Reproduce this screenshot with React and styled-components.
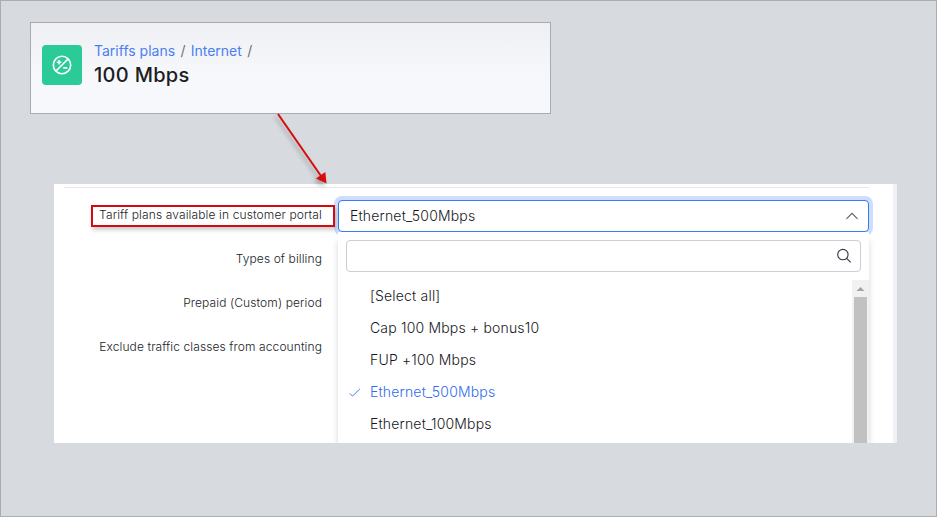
import React from "react";
import styled, { createGlobalStyle } from "styled-components";

const GlobalStyle = createGlobalStyle`
  *, *::before, *::after { box-sizing: border-box; }
  body { margin: 0; font-family: Inter, "Liberation Sans", sans-serif; }
`;

const Page = styled.main`
  position: relative;
  width: 937px;
  height: 517px;
  padding: 21px 0 0 29px;
  border: 1px solid #acadaf;
  background: #d7dadf;
  overflow: hidden;
`;

const HeaderCard = styled.header`
  display: flex;
  align-items: flex-start;
  gap: 12px;
  width: 521px;
  height: 92px;
  padding: 19px 11px;
  border: 1px solid #a9abae;
  background: linear-gradient(#eff0f4, #f7f8fc 60%);
`;

const TariffBadge = styled.div`
  display: grid;
  place-items: center;
  width: 40px;
  height: 40px;
  margin-top: 3px;
  border-radius: 4px;
  background: #2acb97;
`;

const HeaderText = styled.div`
  display: flex;
  flex-direction: column;
`;

const Breadcrumbs = styled.nav`
  display: flex;
  gap: 5.3px;
  height: 18px;
  font-size: 14px;
  line-height: 18px;
  color: #6b7078;
  white-space: nowrap;
`;

const Crumb = styled.a`
  color: #4a7ff0;
`;

const Title = styled.h1`
  margin: 2px 0 0;
  font-size: 20px;
  line-height: 26px;
  font-weight: 500;
  letter-spacing: 0.3px;
  color: #1c1e22;
`;

const FormPanel = styled.section`
  width: 843px;
  height: 259px;
  margin: 70px 0 0 24px;
  padding: 3px 24px 0 10px;
  border-right: 4px solid #eff1f6;
  background: #fff;
  overflow: hidden;
`;

const FormBody = styled.div`
  display: grid;
  grid-template-columns: 271px 531px;
  column-gap: 3px;
  width: 805px;
  height: 256px;
  padding-top: 12px;
  border-top: 1px solid #e8e8ea;
`;

const Labels = styled.div`
  display: flex;
  flex-direction: column;
  align-items: flex-end;
  gap: 22px;
  padding-top: 5px;
`;

const Label = styled.label`
  height: 22px;
  padding: 0 13px 0 8px;
  font-size: 12px;
  line-height: 20px;
  font-weight: 300;
  letter-spacing: 0.1px;
  color: #202328;
  white-space: nowrap;
`;

const MarkedLabel = styled(Label)`
  z-index: 1;
  padding: 0 11px 0 6px;
  border: 2px solid #d20a11;
  line-height: 16px;
  letter-spacing: 0.12px;
  box-shadow: 1px 3px 4px rgba(0, 0, 0, 0.2);
`;

const Picker = styled.div`
  display: flex;
  flex-direction: column;
  height: 243px;
`;

const SelectField = styled.div`
  display: flex;
  flex: none;
  align-items: center;
  justify-content: space-between;
  height: 32px;
  padding: 0 9px 0 11px;
  border: 1px solid #357bf2;
  border-radius: 4px;
  background: #fff;
  box-shadow: 0 0 0 4px #cdddfb;
  font-size: 14px;
  color: #16181c;
`;

const Dropdown = styled.div`
  position: relative;
  flex: 1;
  display: flex;
  flex-direction: column;
  margin-top: 3px;
  padding-top: 5px;
  background: #fff;
  box-shadow: 0 6px 6px rgba(0, 0, 0, 0.16), 0 -3px 0 #fff;
`;

const SearchField = styled.div`
  display: flex;
  flex: none;
  align-items: center;
  justify-content: flex-end;
  height: 32px;
  margin: 0 8px 8px;
  padding-right: 8px;
  border: 1px solid #caced6;
  border-radius: 4px;
`;

const ListArea = styled.div`
  display: flex;
  flex: 1;
`;

const Options = styled.ul`
  flex: 1;
  margin: 0;
  padding: 0;
  list-style: none;
`;

const Option = styled.li`
  display: grid;
  grid-template-columns: 12px 1fr;
  column-gap: 9px;
  align-items: center;
  height: 32px;
  padding-left: 11px;
  font-size: 14px;
  color: ${({ $selected }) => ($selected ? "#2f6cf0" : "#16181c")};
`;

const Value = styled.span`
  padding-bottom: 1px;
  font-weight: 300;
  letter-spacing: 0.18px;
  white-space: nowrap;
`;

const Scrollbar = styled.div`
  display: flex;
  flex-direction: column;
  align-items: center;
  width: 17px;
  background: #f1f1f1;
`;

const ScrollUp = styled.svg`
  display: block;
  width: 17px;
  height: 17px;
`;

const ScrollThumb = styled.div`
  flex: 1;
  width: 13px;
  background: #c1c1c1;
`;

const Arrow = styled.svg`
  position: absolute;
  left: 269px;
  top: 107px;
  filter: drop-shadow(-2px 3px 2px rgba(0, 0, 0, 0.28));
`;

const options = [
  "[Select all]",
  "Cap 100 Mbps + bonus10",
  "FUP +100 Mbps",
  "Ethernet_500Mbps",
  "Ethernet_100Mbps",
];
const selected = "Ethernet_500Mbps";

function TariffIcon() {
  return (
    <svg width="20" height="20" viewBox="0 0 20 20" fill="none" stroke="#fff" strokeWidth="1.6">
      <circle cx="10" cy="10" r="8.7" />
      <path d="M4 16 16 4M4.8 7.2h4.6M7.1 4.9v4.6M11.2 12.9h4.2" />
    </svg>
  );
}

function ChevronUp() {
  return (
    <svg width="14" height="14" viewBox="0 0 14 14" fill="none" stroke="#5d6066" strokeWidth="1.1">
      <path d="m1.5 9.8 5.5-5.5 5.5 5.5" />
    </svg>
  );
}

function SearchIcon() {
  return (
    <svg width="16" height="16" viewBox="0 0 16 16" fill="none" stroke="#34373c" strokeWidth="1.1">
      <circle cx="6.9" cy="6.6" r="5.2" />
      <path d="m10.6 10.3 4.1 4.1" />
    </svg>
  );
}

function CheckIcon() {
  return (
    <svg width="12" height="12" viewBox="0 0 12 12" fill="none" stroke="#4a7ce8" strokeWidth="1">
      <path d="m.8 7.4 2.7 2.7 7.4-7.2" />
    </svg>
  );
}

export default function App() {
  return (
    <>
      <GlobalStyle />
      <Page>
        <HeaderCard>
          <TariffBadge><TariffIcon /></TariffBadge>
          <HeaderText>
            <Breadcrumbs>
              <Crumb>Tariffs plans</Crumb>
              <span>/</span>
              <Crumb>Internet</Crumb>
              <span>/</span>
            </Breadcrumbs>
            <Title>100 Mbps</Title>
          </HeaderText>
        </HeaderCard>
        <FormPanel>
          <FormBody>
            <Labels>
              <MarkedLabel>Tariff plans available in customer portal</MarkedLabel>
              <Label>Types of billing</Label>
              <Label>Prepaid (Custom) period</Label>
              <Label>Exclude traffic classes from accounting</Label>
            </Labels>
            <Picker>
              <SelectField>
                <Value>{selected}</Value>
                <ChevronUp />
              </SelectField>
              <Dropdown>
                <SearchField><SearchIcon /></SearchField>
                <ListArea>
                  <Options>
                    {options.map((name) => (
                      <Option key={name} $selected={name === selected}>
                        {name === selected ? <CheckIcon /> : <span />}
                        <Value>{name}</Value>
                      </Option>
                    ))}
                  </Options>
                  <Scrollbar>
                    <ScrollUp viewBox="0 0 17 17"><path d="M4.5 11 8.5 7l4 4z" fill="#a3a3a3" /></ScrollUp>
                    <ScrollThumb />
                  </Scrollbar>
                </ListArea>
              </Dropdown>
            </Picker>
          </FormBody>
        </FormPanel>
        <Arrow width="64" height="84" viewBox="0 0 64 84">
          <path d="M8 6 51 68" stroke="#d60b0b" strokeWidth="2" />
          <path d="m56.5 75.5-10.5-5 9.3-6.5z" fill="#d60b0b" />
        </Arrow>
      </Page>
    </>
  );
}
